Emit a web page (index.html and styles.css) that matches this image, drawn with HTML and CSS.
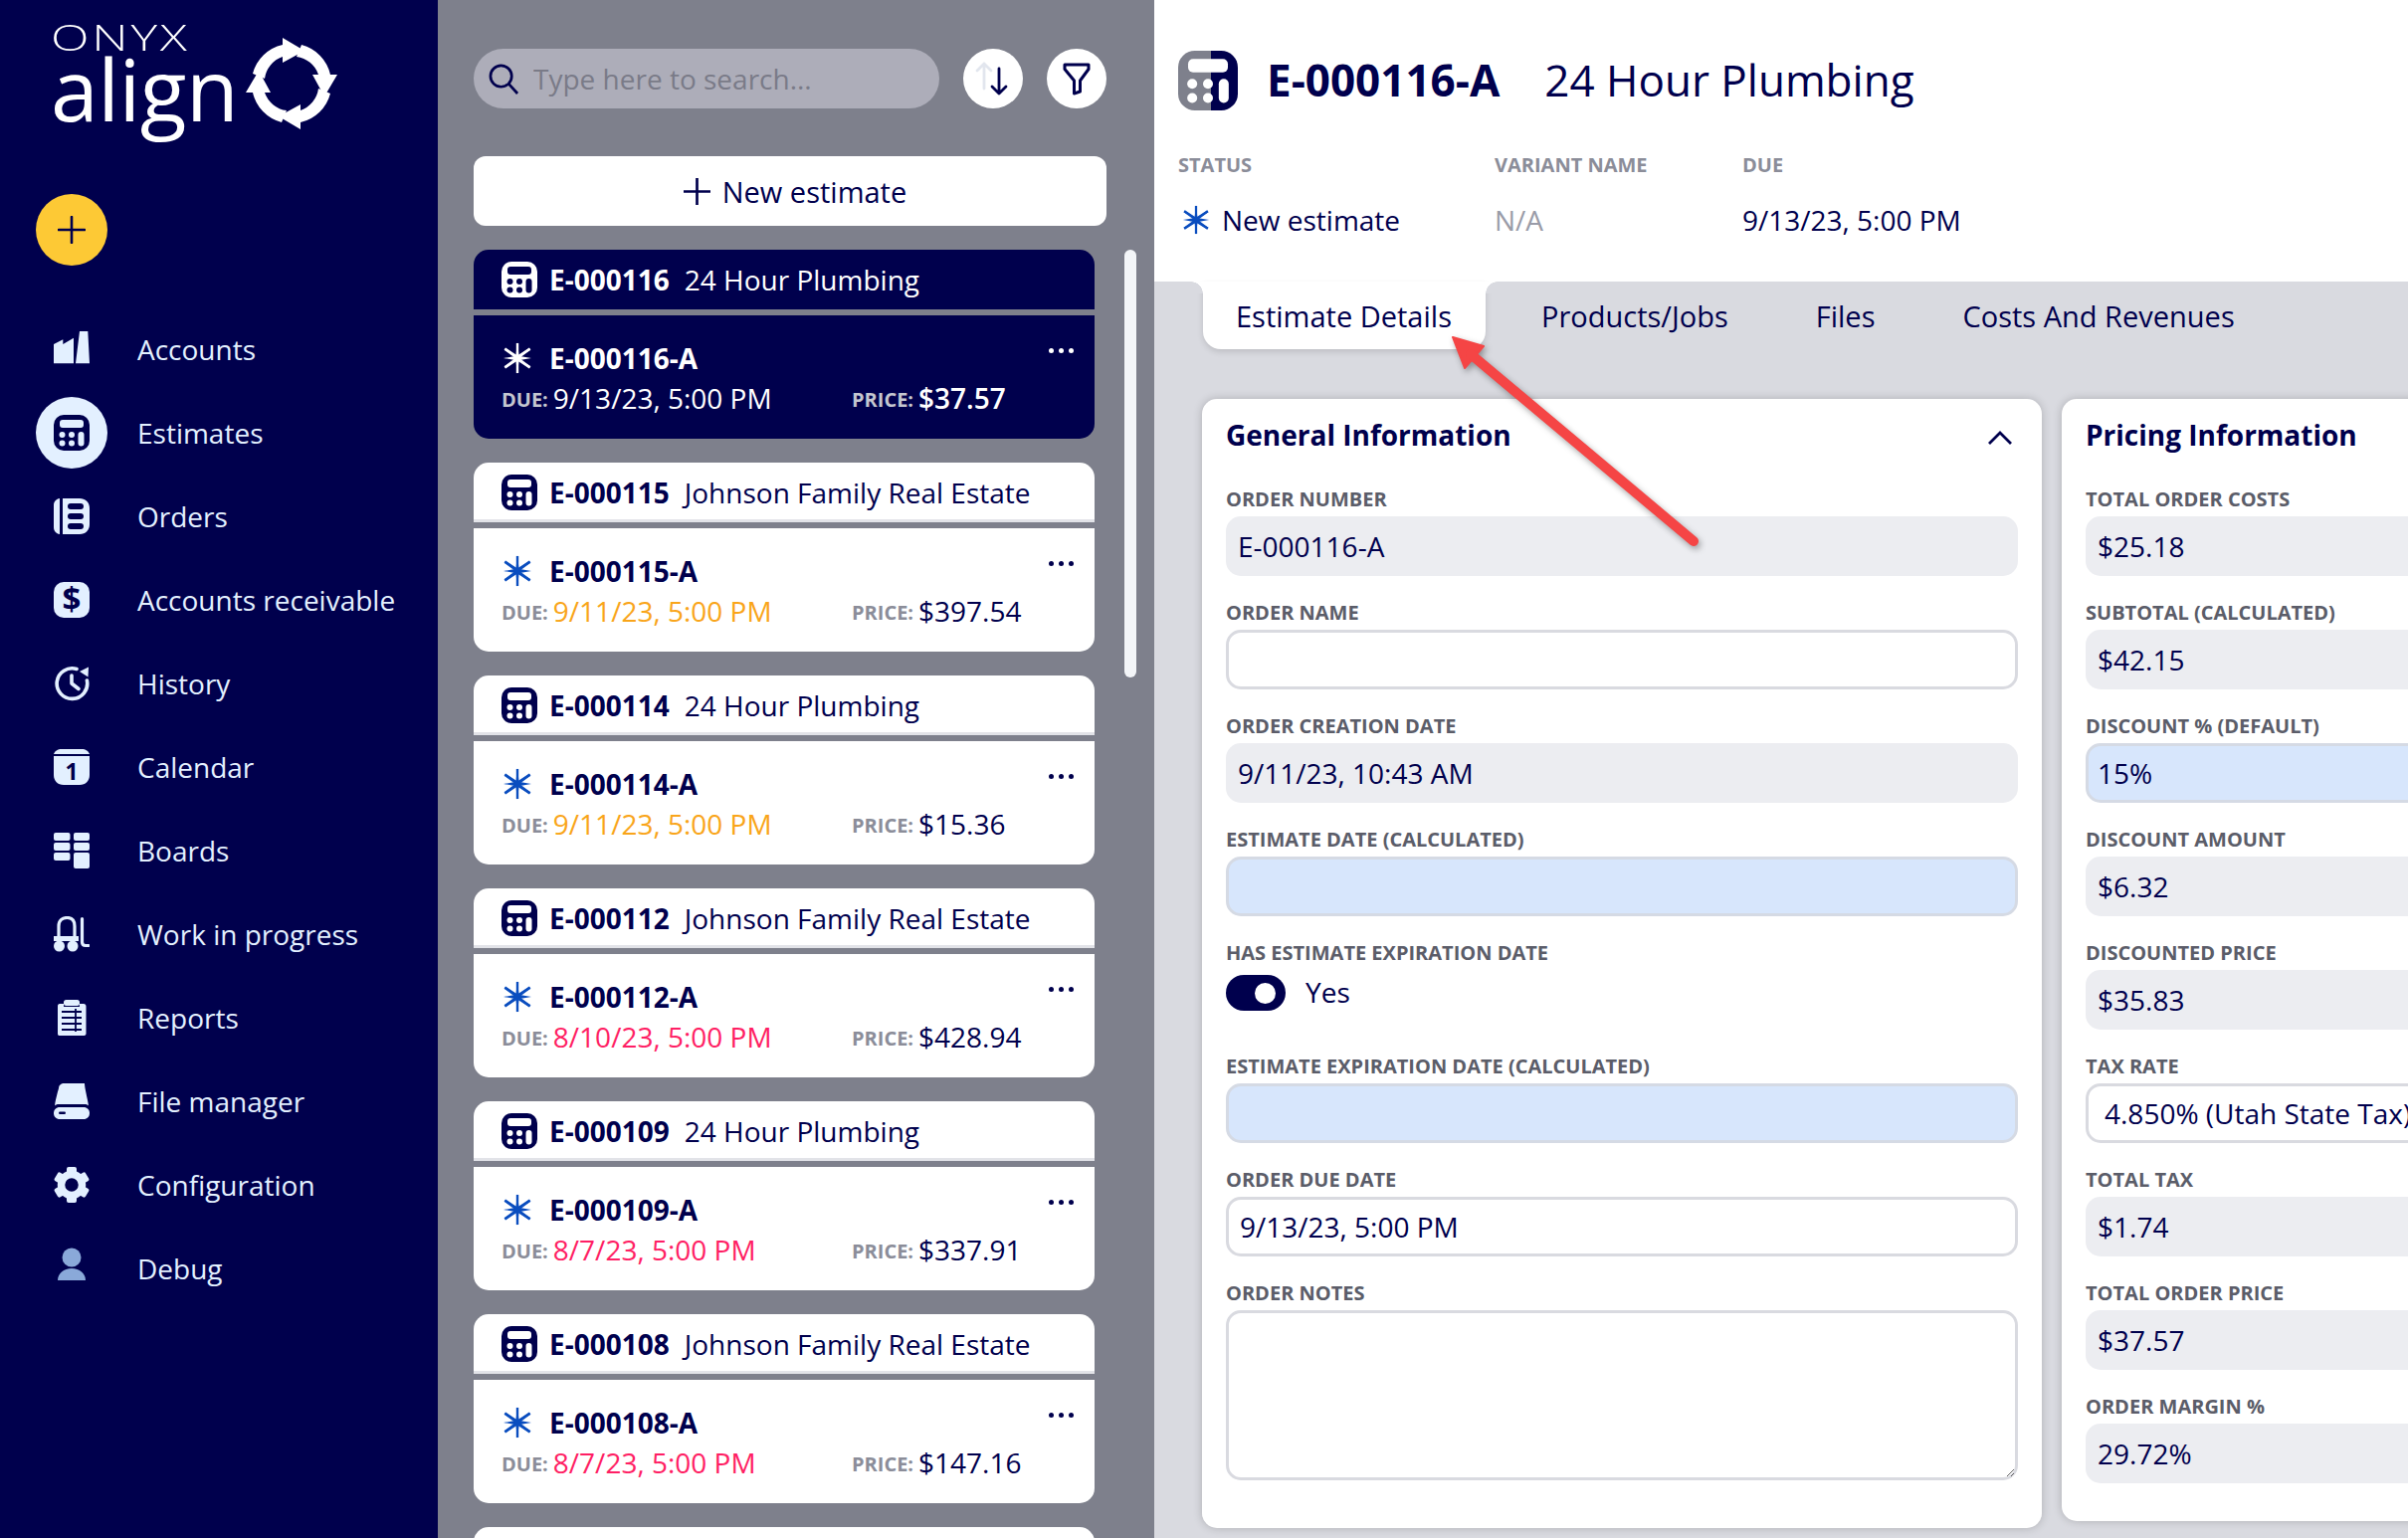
FILE: index.html
```html
<!DOCTYPE html>
<html lang="en">
<head>
<meta charset="utf-8">
<title>Onyx Align - Estimates</title>
<link rel="stylesheet" href="styles.css">
</head>
<body>
<svg class="defs" aria-hidden="true">
  <defs>
    <linearGradient id="half"><stop offset="55%" stop-color="#7e808c"/><stop offset="55%" stop-color="#00004d"/></linearGradient>
    <symbol id="i-calc" viewBox="0 0 36 36">
      <rect width="36" height="36" rx="10" fill="currentColor"/>
      <g class="ic-cut">
        <rect x="6" y="5" width="24" height="8" rx="3"/>
        <circle cx="8.5" cy="20" r="3"/><circle cx="18" cy="20" r="3"/>
        <circle cx="8.5" cy="28.5" r="3"/><circle cx="18" cy="28.5" r="3"/>
        <rect x="24.5" y="17" width="6" height="14.5" rx="3"/>
      </g>
    </symbol>
    <symbol id="i-star" viewBox="0 0 32 32">
      <path fill="currentColor" d="M16 0 17.400 12.400 28 5.500 29.400 7.800 18.400 14 30 16 18.400 18 29.400 24.200 28 26.500 17.400 19.600 16 32 14.600 19.600 4 26.500 2.600 24.200 13.600 18 2 16 13.600 14 2.600 7.800 4 5.500 14.600 12.400Z"/>
      <path stroke="currentColor" stroke-width="2.400" d="M16 1V31M3.500 6.800 28.500 25.200M28.500 6.800 3.500 25.200"/>
    </symbol>
    <symbol id="i-accounts" viewBox="0 0 36 36">
      <path fill="currentColor" d="M0 13 9.300 8.300V13L20 6.700V32.300H0ZM22 32.300 26 0H34.300L36 32.300Z"/>
    </symbol>
    <symbol id="i-orders" viewBox="0 0 36 36">
      <path fill="currentColor" d="M6 0V36C2.500 35.500 0 33 0 29V7C0 3 2.500.5 6 0ZM9 0H26C32 0 36 4 36 10V26C36 32 32 36 26 36H9Z"/>
      <g class="ic-cut"><rect x="14" y="5" width="16" height="6" rx="3"/><rect x="14" y="15" width="16" height="6" rx="3"/><rect x="14" y="25" width="16" height="6" rx="3"/></g>
    </symbol>
    <symbol id="i-dollar" viewBox="0 0 36 36">
      <rect width="36" height="36" rx="10" fill="currentColor"/>
      <text x="18" y="29" class="ic-text ic-dollar" text-anchor="middle">$</text>
    </symbol>
    <symbol id="i-history" viewBox="0 0 36 36">
      <g fill="none" stroke="currentColor" stroke-width="3.600" stroke-linecap="round" stroke-linejoin="round">
        <path d="M23 3.500A15.300 15.300 0 1 0 33.400 15"/>
        <path d="M18 10V18L25 23.500"/>
      </g>
      <path fill="currentColor" d="M26 6 35 1.500 34.500 11.500Z"/>
    </symbol>
    <symbol id="i-cal" viewBox="0 0 36 36">
      <path fill="currentColor" d="M0 5C1 2 4 0 8 0H28C32 0 35 2 36 5ZM0 7H36V26C36 32 32 36 26 36H10C4 36 0 32 0 26Z"/>
      <text x="18" y="31" class="ic-text ic-day" text-anchor="middle">1</text>
    </symbol>
    <symbol id="i-boards" viewBox="0 0 36 36">
      <g fill="currentColor">
        <rect width="16.500" height="8" rx="2"/><rect y="10" width="16.500" height="8" rx="2"/><rect y="20" width="16.500" height="8" rx="2"/>
        <rect x="20" width="16" height="8" rx="2"/><rect x="20" y="10" width="16" height="8" rx="2"/><rect x="20" y="20" width="16" height="16" rx="2"/>
      </g>
    </symbol>
    <symbol id="i-fork" viewBox="0 0 36 36">
      <g fill="none" stroke="currentColor" stroke-width="3.200" stroke-linecap="round">
        <path d="M5 21V10C5 4 9 1.500 13.500 1.500S21 4 21 10V21"/>
        <path d="M28.500 2.500V26C28.500 28.500 30 29.500 32 29.500H35"/>
      </g>
      <path fill="currentColor" d="M0 20H25V25H0Z"/>
      <circle cx="5.500" cy="30" r="5.500" fill="currentColor"/><circle cx="19" cy="30" r="5.500" fill="currentColor"/>
    </symbol>
    <symbol id="i-reports" viewBox="0 0 36 36">
      <path fill="currentColor" d="M6 4H10V7H26V4H30C31.500 4 32.500 5 32.500 6.500V34C32.500 35.200 31.500 36 30.500 36H5.500C4.500 36 4 35.200 4 34V6.500C4 5 4.500 4 6 4Z"/>
      <rect x="10" y="0" width="16" height="6" rx="2.500" fill="currentColor"/>
      <g class="ic-line" stroke-width="1.800"><path d="M8 12H28M8 18H28M8 24H28M8 30H28M22 9V32"/></g>
    </symbol>
    <symbol id="i-drive" viewBox="0 0 36 36">
      <path fill="currentColor" d="M5 0H31C31 5 34 15 35 22.500C34 21.500 33 21 31 21H5C3 21 2 21.500 1 22.500 2 15 5 5 5 5 5 2 7 0 11 0Z"/>
      <path fill="currentColor" d="M6 24H30C33.500 24 36 26.500 36 30S33.500 36 30 36H6C2.500 36 0 33.500 0 30S2.500 24 6 24Z"/>
      <rect x="5" y="28.500" width="7" height="2.500" rx="1.200" class="ic-fill"/>
    </symbol>
    <symbol id="i-gear" viewBox="0 0 36 36">
      <circle cx="18" cy="18" r="10.500" fill="none" stroke="currentColor" stroke-width="7.500"/>
      <g fill="currentColor">
        <rect x="13" y="0" width="10" height="7" rx="2"/><rect x="13" y="29" width="10" height="7" rx="2"/>
        <rect x="13" y="0" width="10" height="7" rx="2" transform="rotate(60 18 18)"/><rect x="13" y="29" width="10" height="7" rx="2" transform="rotate(60 18 18)"/>
        <rect x="13" y="0" width="10" height="7" rx="2" transform="rotate(120 18 18)"/><rect x="13" y="29" width="10" height="7" rx="2" transform="rotate(120 18 18)"/>
      </g>
    </symbol>
    <symbol id="i-user" viewBox="0 0 36 36">
      <circle cx="18" cy="10" r="9.500" fill="currentColor"/>
      <path fill="currentColor" d="M4 33C4 26 10 21 18 21S32 26 32 33Z"/>
    </symbol>
  </defs>
</svg>

<div class="app">
  <aside class="sidebar">
    <div class="logo">
      <div class="logo-words">
        <div class="logo-onyx">ONYX</div>
        <div class="logo-align">align</div>
      </div>
      <svg class="logo-ring" viewBox="-50 -50 100 100" aria-hidden="true">
        <g fill="#fff">
          <path id="seg" d="M-9-46 13-33-9-21V-27A27 27 0 0 0-27-5L-39-10A40 40 0 0 1-9-39Z"/>
          <use href="#seg" transform="rotate(90)"/>
          <use href="#seg" transform="rotate(180)"/>
          <use href="#seg" transform="rotate(270)"/>
        </g>
      </svg>
    </div>
    <button class="add-btn" aria-label="Add">
      <svg viewBox="0 0 28 28"><path d="M14 1V27M1 14H27"/></svg>
    </button>
    <nav class="nav">
      <a class="nav-item"><span class="nav-ico"><svg class="ico36"><use href="#i-accounts"/></svg></span>Accounts</a>
      <a class="nav-item active"><span class="nav-ico"><svg class="ico36"><use href="#i-calc"/></svg></span>Estimates</a>
      <a class="nav-item"><span class="nav-ico"><svg class="ico36"><use href="#i-orders"/></svg></span>Orders</a>
      <a class="nav-item"><span class="nav-ico"><svg class="ico36"><use href="#i-dollar"/></svg></span>Accounts receivable</a>
      <a class="nav-item"><span class="nav-ico"><svg class="ico36"><use href="#i-history"/></svg></span>History</a>
      <a class="nav-item"><span class="nav-ico"><svg class="ico36"><use href="#i-cal"/></svg></span>Calendar</a>
      <a class="nav-item"><span class="nav-ico"><svg class="ico36"><use href="#i-boards"/></svg></span>Boards</a>
      <a class="nav-item"><span class="nav-ico"><svg class="ico36"><use href="#i-fork"/></svg></span>Work in progress</a>
      <a class="nav-item"><span class="nav-ico"><svg class="ico36"><use href="#i-reports"/></svg></span>Reports</a>
      <a class="nav-item"><span class="nav-ico"><svg class="ico36"><use href="#i-drive"/></svg></span>File manager</a>
      <a class="nav-item"><span class="nav-ico"><svg class="ico36"><use href="#i-gear"/></svg></span>Configuration</a>
      <a class="nav-item debug"><span class="nav-ico"><svg class="ico36"><use href="#i-user"/></svg></span>Debug</a>
    </nav>
  </aside>

  <section class="list-pane">
    <div class="search-row">
      <label class="search">
        <svg viewBox="0 0 32 32" class="search-ico"><circle cx="13" cy="13" r="11"/><path d="M21 21 30 31"/></svg>
        <input type="text" placeholder="Type here to search...">
      </label>
      <button class="round-btn" aria-label="Sort">
        <svg viewBox="0 0 36 36" class="ico-sort"><path class="sort-up" d="M9 28V3M2 10 9 3 16 10"/><path class="sort-down" d="M24 8V33M17 26 24 33 31 26"/></svg>
      </button>
      <button class="round-btn" aria-label="Filter">
        <svg viewBox="0 0 36 36" class="ico-filter"><path d="M6 4H30V8.500L21.500 20V31L15.500 33V20L6 8.500Z"/></svg>
      </button>
    </div>
    <button class="new-btn">
      <svg viewBox="0 0 28 28"><path d="M14 0V28M0 14H28"/></svg>
      New estimate
    </button>
    <div class="list-wrap">
      <div class="cards">
        <article class="est selected">
          <header class="est-head"><svg class="ico36"><use href="#i-calc"/></svg><b>E-000116</b><span>24 Hour Plumbing</span></header>
          <div class="est-body">
            <div class="est-row1"><svg class="ico-star"><use href="#i-star"/></svg><b>E-000116-A</b><i class="dots"></i></div>
            <div class="est-row2"><span class="due"><em>DUE:</em><span>9/13/23, 5:00 PM</span></span><span class="price"><em>PRICE:</em><strong>$37.57</strong></span></div>
          </div>
        </article>
        <article class="est">
          <header class="est-head"><svg class="ico36"><use href="#i-calc"/></svg><b>E-000115</b><span>Johnson Family Real Estate</span></header>
          <div class="est-body">
            <div class="est-row1"><svg class="ico-star"><use href="#i-star"/></svg><b>E-000115-A</b><i class="dots"></i></div>
            <div class="est-row2"><span class="due soon"><em>DUE:</em><span>9/11/23, 5:00 PM</span></span><span class="price"><em>PRICE:</em><strong>$397.54</strong></span></div>
          </div>
        </article>
        <article class="est">
          <header class="est-head"><svg class="ico36"><use href="#i-calc"/></svg><b>E-000114</b><span>24 Hour Plumbing</span></header>
          <div class="est-body">
            <div class="est-row1"><svg class="ico-star"><use href="#i-star"/></svg><b>E-000114-A</b><i class="dots"></i></div>
            <div class="est-row2"><span class="due soon"><em>DUE:</em><span>9/11/23, 5:00 PM</span></span><span class="price"><em>PRICE:</em><strong>$15.36</strong></span></div>
          </div>
        </article>
        <article class="est">
          <header class="est-head"><svg class="ico36"><use href="#i-calc"/></svg><b>E-000112</b><span>Johnson Family Real Estate</span></header>
          <div class="est-body">
            <div class="est-row1"><svg class="ico-star"><use href="#i-star"/></svg><b>E-000112-A</b><i class="dots"></i></div>
            <div class="est-row2"><span class="due late"><em>DUE:</em><span>8/10/23, 5:00 PM</span></span><span class="price"><em>PRICE:</em><strong>$428.94</strong></span></div>
          </div>
        </article>
        <article class="est">
          <header class="est-head"><svg class="ico36"><use href="#i-calc"/></svg><b>E-000109</b><span>24 Hour Plumbing</span></header>
          <div class="est-body">
            <div class="est-row1"><svg class="ico-star"><use href="#i-star"/></svg><b>E-000109-A</b><i class="dots"></i></div>
            <div class="est-row2"><span class="due late"><em>DUE:</em><span>8/7/23, 5:00 PM</span></span><span class="price"><em>PRICE:</em><strong>$337.91</strong></span></div>
          </div>
        </article>
        <article class="est">
          <header class="est-head"><svg class="ico36"><use href="#i-calc"/></svg><b>E-000108</b><span>Johnson Family Real Estate</span></header>
          <div class="est-body">
            <div class="est-row1"><svg class="ico-star"><use href="#i-star"/></svg><b>E-000108-A</b><i class="dots"></i></div>
            <div class="est-row2"><span class="due late"><em>DUE:</em><span>8/7/23, 5:00 PM</span></span><span class="price"><em>PRICE:</em><strong>$147.16</strong></span></div>
          </div>
        </article>
        <article class="est"><header class="est-head"></header></article>
      </div>
      <div class="scrollbar"></div>
    </div>
  </section>

  <main class="detail">
    <div class="detail-top">
      <div class="title-row">
        <svg class="title-ico" viewBox="0 0 36 36" aria-hidden="true">
          <rect width="36" height="36" rx="10" fill="url(#half)"/>
          <g fill="#fff">
            <rect x="6" y="5" width="24" height="8" rx="3"/>
            <circle cx="8.500" cy="20" r="3"/><circle cx="18" cy="20" r="3"/>
            <circle cx="8.500" cy="28.500" r="3"/><circle cx="18" cy="28.500" r="3"/>
            <rect x="24.500" y="17" width="6" height="14.500" rx="3"/>
          </g>
        </svg>
        <h1>E-000116-A</h1>
        <h2>24 Hour Plumbing</h2>
      </div>
      <div class="meta">
        <div class="meta-col status">
          <div class="meta-label">STATUS</div>
          <div class="meta-val"><svg class="ico-star-lg"><use href="#i-star"/></svg>New estimate</div>
        </div>
        <div class="meta-col variant">
          <div class="meta-label">VARIANT NAME</div>
          <div class="meta-val muted">N/A</div>
        </div>
        <div class="meta-col">
          <div class="meta-label">DUE</div>
          <div class="meta-val">9/13/23, 5:00 PM</div>
        </div>
      </div>
    </div>
    <div class="detail-body">
      <div class="tabs">
        <div class="tab active">Estimate Details</div>
        <div class="tab">Products/Jobs</div>
        <div class="tab">Files</div>
        <div class="tab">Costs And Revenues</div>
      </div>
      <div class="panels">
        <section class="panel general">
          <div class="panel-head"><h3>General Information</h3>
            <svg class="chev" viewBox="0 0 26 16"><path d="M2 14 13 3 24 14"/></svg>
          </div>
          <div class="field"><div class="label">ORDER NUMBER</div><div class="box ro">E-000116-A</div></div>
          <div class="field"><div class="label">ORDER NAME</div><div class="box edit"></div></div>
          <div class="field"><div class="label">ORDER CREATION DATE</div><div class="box ro">9/11/23, 10:43 AM</div></div>
          <div class="field"><div class="label">ESTIMATE DATE (CALCULATED)</div><div class="box calc"></div></div>
          <div class="field"><div class="label">HAS ESTIMATE EXPIRATION DATE</div>
            <div class="toggle-row"><span class="toggle"><i></i></span><span>Yes</span></div>
          </div>
          <div class="field"><div class="label">ESTIMATE EXPIRATION DATE (CALCULATED)</div><div class="box calc"></div></div>
          <div class="field"><div class="label">ORDER DUE DATE</div><div class="box edit">9/13/23, 5:00 PM</div></div>
          <div class="field"><div class="label">ORDER NOTES</div><textarea class="notes" aria-label="Order notes"></textarea></div>
        </section>
        <section class="panel pricing">
          <div class="panel-head"><h3>Pricing Information</h3></div>
          <div class="field"><div class="label">TOTAL ORDER COSTS</div><div class="box ro">$25.18</div></div>
          <div class="field"><div class="label">SUBTOTAL (CALCULATED)</div><div class="box ro">$42.15</div></div>
          <div class="field"><div class="label">DISCOUNT % (DEFAULT)</div><div class="box calc">15%</div></div>
          <div class="field"><div class="label">DISCOUNT AMOUNT</div><div class="box ro">$6.32</div></div>
          <div class="field"><div class="label">DISCOUNTED PRICE</div><div class="box ro">$35.83</div></div>
          <div class="field"><div class="label">TAX RATE</div><div class="box edit select">4.850% (Utah State Tax)</div></div>
          <div class="field"><div class="label">TOTAL TAX</div><div class="box ro">$1.74</div></div>
          <div class="field"><div class="label">TOTAL ORDER PRICE</div><div class="box ro">$37.57</div></div>
          <div class="field"><div class="label">ORDER MARGIN %</div><div class="box ro">29.72%</div></div>
        </section>
      </div>
    </div>
  </main>

  <svg class="callout" viewBox="0 0 270 230" aria-hidden="true">
    <path d="M4 5 35 14 16 36Z" fill="#f54545" stroke="#f54545" stroke-width="2" stroke-linejoin="round"/>
    <path d="M22 22 246 210" stroke="#f54545" stroke-width="10" stroke-linecap="round" fill="none"/>
  </svg>
</div>
</body>
</html>
```
FILE: styles.css
```css
* { box-sizing: border-box; }
html, body { margin: 0; height: 100%; }
body {
  width: 2420px;
  height: 1546px;
  overflow: hidden;
  font-family: "Open Sans", "Liberation Sans", sans-serif;
  color: #00004d;
  background: #fff;
}
.defs { position: absolute; width: 0; height: 0; }
.app { position: relative; display: flex; width: 2420px; height: 1546px; overflow: hidden; }
button { font-family: inherit; border: 0; padding: 0; cursor: pointer; }
em { font-style: normal; }

/* icon helpers */
.ic-cut { fill: var(--ic-bg, #00004d); }
.ic-fill { fill: var(--ic-bg, #00004d); }
.ic-line { stroke: var(--ic-bg, #00004d); fill: none; }
.ic-text { font-family: "Open Sans", sans-serif; font-weight: 700; fill: var(--ic-bg, #00004d); }
.ic-dollar { font-size: 33px; }
.ic-day { font-size: 23px; }
.ico36 { width: 36px; height: 36px; display: block; flex: none; }

/* sidebar */
.sidebar {
  flex: none;
  width: 440px;
  background: #00004d;
  color: #e3f0ff;
  display: flex;
  flex-direction: column;
}
.logo { height: 195px; padding: 24px 0 0 54px; display: flex; align-items: flex-start; --ic-bg: #00004d; }
.logo-words { width: 189px; color: #fff; }
.logo-onyx { font-size: 36px; height: 28px; line-height: 28px; font-weight: 300; letter-spacing: 2px; margin-left: -3px; transform: scaleX(1.4); transform-origin: left center; }
.logo-align { font-size: 86px; height: 76px; line-height: 76px; font-weight: 400; letter-spacing: -.5px; margin-left: -3px; margin-top: -1px; }
.logo-ring { width: 100px; height: 100px; margin-top: 10px; }
.add-btn {
  width: 72px; height: 72px; margin-left: 36px; border-radius: 50%;
  background: #fdc935; display: flex; align-items: center; justify-content: center;
}
.add-btn svg { width: 28px; height: 28px; fill: none; stroke: #00004d; stroke-width: 2.600; stroke-linecap: round; }
.nav { margin-top: 42px; display: flex; flex-direction: column; }
.nav-item { height: 84px; display: flex; align-items: center; gap: 30px; padding-left: 36px; font-size: 28px; }
.nav-ico { width: 72px; height: 72px; border-radius: 50%; display: flex; align-items: center; justify-content: center; color: #e3f0ff; --ic-bg: #00004d; }
.nav-item.active .nav-ico { background: #e3f0ff; color: #00004d; --ic-bg: #e3f0ff; }
.nav-item.debug .nav-ico { color: #8aa9d9; transform: translateY(-3px); }

/* list */
.list-pane {
  flex: none;
  width: 720px;
  height: 100%;
  background: #7e808c;
  padding: 49px 48px 0 36px;
  overflow: hidden;
}
.search-row { display: flex; gap: 24px; height: 60px; margin-bottom: 48px; }
.search {
  width: 468px; height: 60px; border-radius: 30px; background: #adadb9;
  display: flex; align-items: center; padding-left: 15px; gap: 14px;
}
.search-ico { width: 31px; height: 31px; fill: none; stroke: #00004d; stroke-width: 2.800; flex: none; }
.search input { flex: 1; min-width: 0; border: 0; background: none; outline: 0; font: 28px/40px "Open Sans", sans-serif; color: #00004d; padding: 0; }
.search input::placeholder { color: #7a7b88; opacity: 1; }
.round-btn { width: 60px; height: 60px; flex: none; border-radius: 50%; background: #fff; display: flex; align-items: center; justify-content: center; }
.ico-sort { width: 36px; height: 36px; fill: none; stroke-width: 2.800; stroke-linecap: round; stroke-linejoin: round; }
.sort-up { stroke: #e2e6ee; }
.sort-down { stroke: #00004d; }
.ico-filter { width: 36px; height: 36px; fill: none; stroke: #00004d; stroke-width: 3; stroke-linejoin: round; }
.new-btn {
  width: 636px; height: 70px; margin-bottom: 24px; border-radius: 12px; background: #fff;
  color: #00004d; font-size: 29px; font-weight: 500; padding-left: 10px;
  display: flex; align-items: center; justify-content: center; gap: 12px;
}
.new-btn svg { width: 27px; height: 27px; fill: none; stroke: #00004d; stroke-width: 2.800; }
.list-wrap { display: flex; align-items: flex-start; gap: 30px; }
.cards { width: 624px; flex: none; display: flex; flex-direction: column; gap: 24px; }
.scrollbar { width: 12px; height: 430px; flex: none; background: #f3f5f8; border-radius: 6px; }
.est-head {
  height: 60px; background: #fff; border-radius: 15px 15px 0 0; box-shadow: inset 0 -3px 0 #e2e3e8;
  display: flex; align-items: center; padding-left: 28px;
  --ic-bg: #fff;
}
.est-head b { font-weight: 700; margin-left: 12px; font-size: 28px; }
.est-head span { margin-left: 15px; font-size: 28px; }
.est-body { height: 124px; margin-top: 6px; background: #fff; border-radius: 0 0 15px 15px; padding: 25px 0 0 28px; }
.est-row1 { display: flex; align-items: center; height: 36px; position: relative; font-size: 28px; }
.est-row1 b { margin-left: 16px; }
.ico-star { width: 32px; height: 32px; color: #0a4dbf; flex: none; }
.dots { position: absolute; left: 550px; top: 8px; width: 5px; height: 5px; border-radius: 50%; background: currentColor; box-shadow: 10px 0 0 currentColor, 20px 0 0 currentColor; }
.est-row2 { display: flex; align-items: baseline; margin-top: 2px; font-size: 28px; line-height: 40px; }
.due { width: 352px; flex: none; }
.est-row2 em { font-size: 20px; font-weight: 700; color: #8b8d99; margin-right: 5px; vertical-align: 2px; line-height: 20px; }
.price strong { font-weight: 500; }
.soon span { color: #f9a51a; }
.late span { color: #ff1f64; }
.est.selected .est-head { background: #00004d; color: #fff; box-shadow: none; --ic-bg: #00004d; }
.est.selected .est-head svg { color: #fff; }
.est.selected .est-body { background: #00004d; color: #fff; }
.est.selected .ico-star { color: #fff; }
.est.selected .est-row2 em { color: #c4c6d0; }
.est.selected .price strong { font-weight: 600; }

/* detail */
.detail { flex: 1; min-width: 0; height: 100%; display: flex; flex-direction: column; }
.detail-top { height: 283px; flex: none; padding: 51px 0 0 24px; background: #fff; }
.title-row { display: flex; align-items: center; height: 60px; }
.title-ico { width: 60px; height: 60px; flex: none; }
h1 { margin: 0 0 3px 29px; font-size: 44px; font-weight: 700; }
h2 { margin: 0 0 3px 45px; font-size: 44px; font-weight: 400; }
.meta { display: flex; margin-top: 42px; }
.meta-col { width: 249px; }
.meta-col.status { width: 318px; }
.meta-label { font-size: 20px; line-height: 26px; font-weight: 700; color: #8b8d99; }
.meta-val { margin-top: 22px; height: 40px; font-size: 28px; line-height: 40px; display: flex; align-items: center; white-space: nowrap; }
.ico-star-lg { width: 30px; height: 32px; margin: 0 11px 0 3px; color: #0a4dbf; flex: none; }
.muted { color: #9a9ca8; }
.detail-body { flex: 1; min-height: 0; background: #d9dae0; }
.tabs { display: flex; height: 68px; padding-left: 49px; font-size: 29px; font-weight: 500; }
.tab { padding: 15px 44px 0; line-height: 40px; white-space: nowrap; }
.tab.active { position: relative; width: 284px; padding: 15px 0 0 33px; margin-right: 12px; background: #fff; border-radius: 0 0 18px 18px; box-shadow: 0 3px 6px rgba(0,0,0,.12); }
.tab.active::before, .tab.active::after { content: ""; position: absolute; top: 0; width: 12px; height: 12px; }
.tab.active::before { left: -12px; background: radial-gradient(circle at 0 100%, #d9dae0 11.5px, #fff 12px); }
.tab.active::after { right: -12px; background: radial-gradient(circle at 100% 100%, #d9dae0 11.5px, #fff 12px); }
.panels { display: flex; align-items: flex-start; gap: 20px; margin: 50px 0 0 48px; width: 1800px; }
.panel { width: 844px; flex: none; background: #fff; border-radius: 15px; padding: 18px 24px 23px 24px; box-shadow: 0 0 10px rgba(0,0,0,.2); }
.panel.pricing { padding-bottom: 13px; }
.panel-head { height: 36px; margin-bottom: 35px; display: flex; align-items: center; justify-content: space-between; }
h3 { margin: 0; font-size: 28px; font-weight: 700; white-space: nowrap; }
.chev { width: 26px; height: 16px; margin-right: 5px; margin-top: 6px; fill: none; stroke: #00004d; stroke-width: 2.800; }
.field { margin-bottom: 25px; }
.label { height: 25px; line-height: 23px; margin-bottom: 4px; font-size: 20px; font-weight: 700; color: #5b5d69; white-space: nowrap; }
.box { width: 796px; height: 60px; border-radius: 15px; font-size: 28px; line-height: 40px; padding: 10px 12px; white-space: nowrap; }
.box.ro { background: #ecedf1; }
.box.edit { background: #fff; border: 3px solid #d9dae0; padding: 7px 11px; }
.box.select { padding-left: 16px; }
.box.calc { background: #d7e6fc; border: 3px solid #d5dae4; padding: 7px 9px; }
.toggle-row { height: 60px; padding-top: 5px; display: flex; align-items: flex-start; gap: 20px; font-size: 28px; line-height: 34px; }
.toggle { width: 60px; height: 36px; border-radius: 18px; background: #00004d; display: flex; align-items: center; justify-content: flex-end; padding-right: 10px; }
.toggle i { width: 21px; height: 21px; border-radius: 50%; background: #fff; display: block; }
.notes { display: block; width: 796px; height: 171px; border: 3px solid #d9dae0; border-radius: 15px; background: #fff; resize: both; outline: 0; font: 28px "Open Sans", sans-serif; }

/* annotation arrow */
.callout { position: absolute; left: 1456px; top: 334px; width: 270px; height: 230px; overflow: visible; filter: drop-shadow(2px 3px 3px rgba(0,0,0,.35)); }
```
